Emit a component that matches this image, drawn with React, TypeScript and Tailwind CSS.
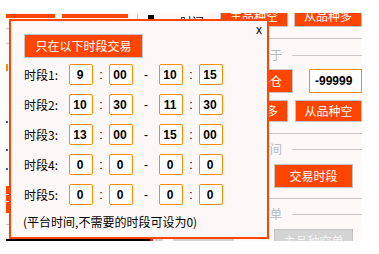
import React from "react";

const cjk = { fontFamily: '"Noto Sans CJK SC", "Liberation Sans", sans-serif' };
const num = { fontFamily: '"Liberation Sans", Arial, sans-serif' };

function Box({ v }: { v: string }) {
  return (
    <div
      className="w-[24px] h-[21px] border border-[#ff8c00] rounded-[2px] bg-white flex items-center justify-center pr-[2px] text-[12px] font-bold text-black leading-none"
      style={num}
    >
      {v}
    </div>
  );
}

function Row({ n, a, b, c, d }: { n: number; a: string; b: string; c: string; d: string }) {
  return (
    <div className="flex items-center h-[21px]">
      <span className="w-[45px] text-[12px] leading-[16px] text-black" style={cjk}>
        时段{n}:
      </span>
      <Box v={a} />
      <span className="w-[16px] text-center text-[12px] leading-none text-black" style={num}>:</span>
      <Box v={b} />
      <span className="w-[26px] text-center text-[12px] leading-none text-black" style={num}>-</span>
      <Box v={c} />
      <span className="w-[16px] text-center text-[12px] leading-none text-black" style={num}>:</span>
      <Box v={d} />
    </div>
  );
}

function OBtn({ w, h, text, className = "" }: { w: string; h: string; text: string; className?: string }) {
  return (
    <div
      className={`${w} ${h} shrink-0 bg-[#ff4500] border border-[#c4c4c4] text-white text-[12px] flex items-center justify-center leading-none ${className}`}
      style={cjk}
    >
      {text}
    </div>
  );
}

function GroupLabel({ text }: { text: string }) {
  return (
    <div className="flex items-center h-[16px] pl-[14px]">
      <span className="text-[12px] leading-[16px] text-[#b8b8b8]" style={cjk}>{text}</span>
      <div className="flex-1 h-px bg-[#c8c8c8] ml-[10px]" />
    </div>
  );
}

export default function App() {
  return (
    <div className="w-[379px] h-[254px] bg-white relative overflow-hidden">
      {/* background window */}
      <div className="ml-[6px] mt-[13px] w-[356px] h-[228px] bg-[#fdf9f8] overflow-hidden flex flex-col">
        {/* toolbar */}
        <div className="flex items-start h-[14px] shrink-0">
          <div className="w-[49px] h-[4px] mt-[1px] bg-[#ff4500] shrink-0" />
          <div className="w-[66px] h-[4px] mt-[1px] ml-[7px] bg-[#ff4500] shrink-0" />
          <div className="w-px h-[6px] mt-[1px] ml-[9px] bg-[#c8c8c8] shrink-0" />
          <div className="w-[6px] h-[6px] mt-[2px] ml-[10px] bg-black shrink-0" />
          <span className="ml-[26px] mt-[1px] text-[12px] leading-[16px] text-black w-[40px] shrink-0" style={cjk}>时间:</span>
          <OBtn w="w-[68px]" h="h-[22px]" text="主品种空" className="-mt-[8px]" />
          <OBtn w="w-[68px]" h="h-[22px]" text="从品种多" className="-mt-[8px] ml-[6px]" />
        </div>
        {/* body */}
        <div className="flex flex-1">
          <div className="w-[214px] shrink-0 flex flex-col">
            <div className="w-[3px] h-px bg-[#c8c8c8] mt-[1px]" />
            <div className="w-[3px] h-px bg-[#c8c8c8] mt-[14px]" />
            <div className="w-[2px] h-[7px] bg-[#ff8c00] mt-[20px]" />
            <div className="w-[2px] h-[2px] bg-[#3060a0] mt-[50px]" />
            <div className="w-[2px] h-[2px] bg-[#3060a0] mt-[26px]" />
            <div className="w-[2px] h-[2px] bg-[#3060a0] mt-[17px]" />
            <div className="w-[3px] h-[27px] bg-[#ff4500] mt-[16px] flex flex-col">
              <div className="h-px bg-white mt-[8px]" />
              <div className="h-px bg-white mt-[6px]" />
            </div>
            <div className="w-[3px] h-px bg-[#c8c8c8] mt-[11px]" />
            <div className="flex mt-[14px] h-[4px]">
              <div className="w-[144px] bg-black shrink-0" />
              <div className="w-[3px] bg-[#e02020] shrink-0" />
              <div className="w-[2px] shrink-0" />
              <div className="w-[8px] bg-[#d0d0d0] shrink-0" />
              <div className="w-[10px] shrink-0" />
              <div className="w-[61px] bg-[#d0d0d0] shrink-0" />
            </div>
          </div>
          <div className="w-[142px] shrink-0 flex flex-col">
            <div className="h-px bg-[#c8c8c8] mt-[11px]" />
            <div className="mt-[8px]"><GroupLabel text="价差大于" /></div>
            <div className="flex mt-[6px] h-[24px]">
              <OBtn w="w-[70px]" h="h-[24px]" text="一键平仓" className="ml-[3px]" />
              <div
                className="ml-[16px] w-[53px] h-[24px] shrink-0 border border-[#ff8c00] bg-white flex items-center pl-[5px] text-[12px] font-bold text-black leading-none"
                style={num}
              >
                -99999
              </div>
            </div>
            <div className="flex mt-[7px] h-[22px]">
              <OBtn w="w-[68px]" h="h-[22px]" text="主品种多" />
              <OBtn w="w-[67px]" h="h-[22px]" text="从品种空" className="ml-[7px]" />
            </div>
            <div className="h-px bg-[#c8c8c8] mt-[11px]" />
            <div className="mt-[7px]"><GroupLabel text="交易时间" /></div>
            <OBtn w="w-[79px]" h="h-[24px]" text="交易时段" className="mt-[7px] ml-[54px]" />
            <div className="h-px bg-[#c8c8c8] mt-[10px]" />
            <div className="mt-[7px]"><GroupLabel text="一键下单" /></div>
            <div
              className="mt-[7px] ml-[54px] w-[79px] h-[24px] shrink-0 bg-[#d4d4d4] border border-[#c4c4c4] text-[#f4f4f4] text-[12px] flex items-center justify-center leading-none"
              style={cjk}
            >
              主品种空单
            </div>
          </div>
        </div>
      </div>

      {/* dialog */}
      <div className="absolute left-[9px] top-[19px] w-[260px] h-[220px] border-2 border-[#ff4500] bg-[#fcf8f7] pl-[13px] pt-[13px] flex flex-col">
        <span className="absolute top-[2px] right-[5px] text-[12px] leading-[14px] text-black" style={num}>x</span>
        <OBtn w="w-[119px]" h="h-[24px]" text="只在以下时段交易" />
        <div className="flex flex-col gap-[9px] mt-[6px]">
          <Row n={1} a="9" b="00" c="10" d="15" />
          <Row n={2} a="10" b="30" c="11" d="30" />
          <Row n={3} a="13" b="00" c="15" d="00" />
          <Row n={4} a="0" b="0" c="0" d="0" />
          <Row n={5} a="0" b="0" c="0" d="0" />
        </div>
        <div className="mt-[9px] -ml-[1px] text-[12px] leading-[16px] text-black" style={cjk}>
          (平台时间,不需要的时段可设为0)
        </div>
      </div>
    </div>
  );
}
